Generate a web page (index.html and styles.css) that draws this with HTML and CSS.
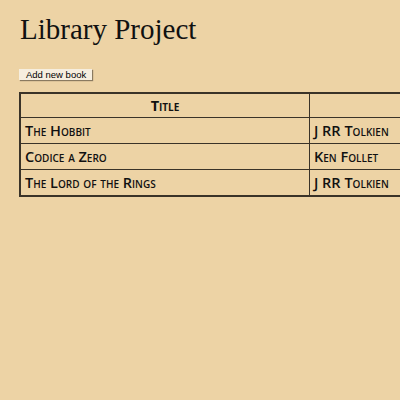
FILE: index.html
```html
<!DOCTYPE html>
<html>
<head>
<meta charset="utf-8">
<link rel="stylesheet" href="styles.css">
</head>
<body>
<h1 class="title">Library Project</h1>
<button class="add-btn">Add new book</button>
<table class="books">
  <thead>
    <tr><th class="col-title">Title</th><th class="col-author"></th></tr>
  </thead>
  <tbody>
    <tr><td>The Hobbit</td><td>J RR Tolkien</td></tr>
    <tr><td>Codice a Zero</td><td>Ken Follet</td></tr>
    <tr><td>The Lord of the Rings</td><td>J RR Tolkien</td></tr>
  </tbody>
</table>
</body>
</html>
```
FILE: styles.css
```css
html, body {
  margin: 0;
  background: #edd3a5;
}
body {
  padding: 12px 19px;
  width: 1000px;
}
.title {
  font-family: "Liberation Serif", serif;
  font-weight: normal;
  font-size: 29px;
  color: #111;
  margin: 0 0 23px 1px;
  line-height: 34px;
}
.add-btn {
  display: block;
  font-family: "Liberation Sans", Arial, sans-serif;
  font-size: 9.5px;
  padding: 0 6px 0 7px;
  height: 11px;
  line-height: 10px;
  background: #f6eedf;
  border: none;
  box-shadow: 1px 1px 1px #8a7a60;
  color: #000;
  margin: 0 0 12px 0;
}
.books {
  border-collapse: collapse;
  width: 960px;
  border: 2px solid #3a3328;
  font-family: "Open Sans", sans-serif;
  font-variant: small-caps;
  font-weight: 600;
  font-size: 14.5px;
  color: #111;
}
.books th, .books td {
  border: 1px solid #3a3328;
  height: 25px;
  padding: 0 4px;
  text-align: left;
}
.books th {
  height: 23px;
  text-align: center;
}
.col-title {
  width: 280px;
}
```
